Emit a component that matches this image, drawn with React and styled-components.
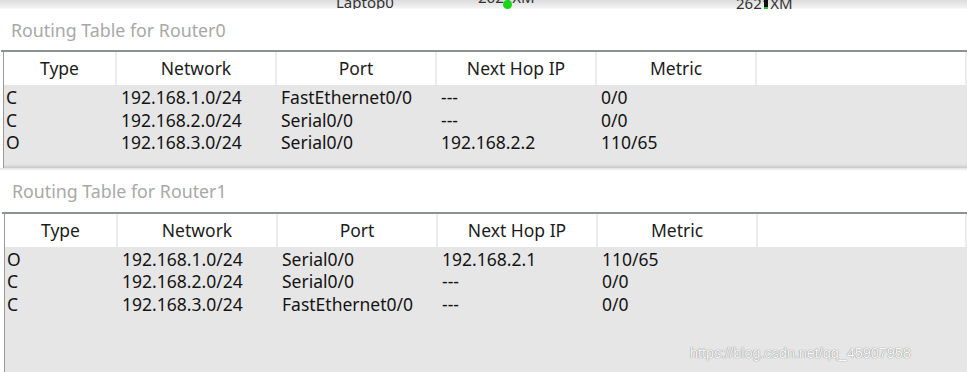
import React from "react";
import styled, { createGlobalStyle } from "styled-components";

const GlobalStyle = createGlobalStyle`
  html, body {
    margin: 0;
    padding: 0;
    background: #ffffff;
    overflow: hidden;
  }
  body {
    font-family: "Noto Sans", "Open Sans", sans-serif;
    color: #111;
  }
`;

const Page = styled.div`
  position: relative;
  width: 967px;
  height: 372px;
  overflow: hidden;
  display: flex;
  flex-direction: column;
  background: #fff;
`;

/* strip of the topology workspace peeking above the dialogs */
const Workspace = styled.div`
  position: relative;
  height: 9px;
  flex: none;
  overflow: hidden;
  background: linear-gradient(#dcdcdc, #f2f2f2 85%, #fafafa);
`;

const DeviceLabel = styled.span`
  position: absolute;
  left: ${(p) => p.x}px;
  top: ${(p) => p.y}px;
  font-family: "Noto Sans", sans-serif;
  font-size: 15px;
  line-height: 16px;
  color: #333;
  white-space: nowrap;
`;

const LinkDot = styled.span`
  position: absolute;
  left: ${(p) => p.x}px;
  top: ${(p) => p.y}px;
  width: ${(p) => p.w}px;
  height: ${(p) => p.h}px;
  border-radius: ${(p) => (p.round ? "50%" : "0")};
  background: ${(p) => p.color};
`;

const Panel = styled.section`
  display: flex;
  flex-direction: column;
  flex: ${(p) => (p.grow ? "1 1 auto" : "none")};
  padding-left: ${(p) => p.offset}px;
`;

const Title = styled.div`
  height: 43px;
  display: flex;
  align-items: center;
  padding-left: 10px;
  font-size: 17.8px;
  color: #a8a8a8;
  background: #fff;
  border-bottom: 2px solid #8c9196;
  box-sizing: border-box;
`;

const Table = styled.div`
  display: flex;
  flex-direction: column;
  flex: 1 1 auto;
  border-left: 1px solid #9a9a9a;
  margin-left: 2px;
`;

const Grid = styled.div`
  display: grid;
  grid-template-columns: 113px 160px 160px 160px 160px 1fr;
`;

const HeaderRow = styled(Grid)`
  height: 33px;
  background: #fff;
`;

const HeaderCell = styled.div`
  display: flex;
  align-items: center;
  justify-content: center;
  font-size: 17.5px;
  color: #1c1c1c;
  border-right: 2px solid #ececec;
  padding-bottom: 1px;
`;

const Body = styled.div`
  flex: 1 1 auto;
  height: ${(p) => (p.h ? `${p.h}px` : "auto")};
  padding-top: 1.5px;
  background: #e6e6e6;
  box-shadow: ${(p) => (p.shadow ? "inset 0 -4px 3px -2px #c9c9c9" : "none")};
`;

const DataRow = styled(Grid)`
  height: 22.5px;
  align-items: center;
`;

const DataCell = styled.div`
  font-size: 17.5px;
  line-height: 21px;
  color: #141414;
  padding-left: ${(p) => (p.first ? 2 : 4)}px;
  white-space: nowrap;
`;

const Divider = styled.div`
  height: 3px;
  flex: none;
  background: linear-gradient(#e2e2e2, #fff);
`;

const Watermark = styled.div`
  position: absolute;
  left: 690px;
  top: 345px;
  font-family: "Liberation Sans", Arial, sans-serif;
  font-size: 14.4px;
  color: #f8f8f8;
  text-shadow: 0 0 1px #868686, 0 0 1px #a0a0a0;
`;

const columns = ["Type", "Network", "Port", "Next Hop IP", "Metric", ""];

const router0 = [
  ["C", "192.168.1.0/24", "FastEthernet0/0", "---", "0/0"],
  ["C", "192.168.2.0/24", "Serial0/0", "---", "0/0"],
  ["O", "192.168.3.0/24", "Serial0/0", "192.168.2.2", "110/65"],
];

const router1 = [
  ["O", "192.168.1.0/24", "Serial0/0", "192.168.2.1", "110/65"],
  ["C", "192.168.2.0/24", "Serial0/0", "---", "0/0"],
  ["C", "192.168.3.0/24", "FastEthernet0/0", "---", "0/0"],
];

function RoutingTable({ name, rows, offset, bodyHeight, shadow, grow }) {
  return (
    <Panel offset={offset} grow={grow}>
      <Title>Routing Table for {name}</Title>
      <Table>
        <HeaderRow>
          {columns.map((c, i) => (
            <HeaderCell key={i}>{c}</HeaderCell>
          ))}
        </HeaderRow>
        <Body h={bodyHeight} shadow={shadow}>
          {rows.map((r, i) => (
            <DataRow key={i}>
              {r.map((v, j) => (
                <DataCell key={j} first={j === 0}>
                  {v}
                </DataCell>
              ))}
            </DataRow>
          ))}
        </Body>
      </Table>
    </Panel>
  );
}

export default function App() {
  return (
    <>
      <GlobalStyle />
      <Page>
        <Workspace>
          <DeviceLabel x={336} y={-6}>Laptop0</DeviceLabel>
          <DeviceLabel x={478} y={-11}>2621XM</DeviceLabel>
          <LinkDot x={503} y={0} w={9} h={9} round color="#19d419" />
          <DeviceLabel x={736} y={-5}>2621XM</DeviceLabel>
          <LinkDot x={764} y={-1} w={4} h={9} color="#111" />
          <LinkDot x={764} y={7} w={4} h={2} color="#2fbf2f" />
        </Workspace>
        <RoutingTable name="Router0" rows={router0} offset={1} bodyHeight={81} shadow />
        <Divider />
        <RoutingTable name="Router1" rows={router1} offset={2} grow />
        <Watermark>https://blog.csdn.net/qq_45907958</Watermark>
      </Page>
    </>
  );
}
